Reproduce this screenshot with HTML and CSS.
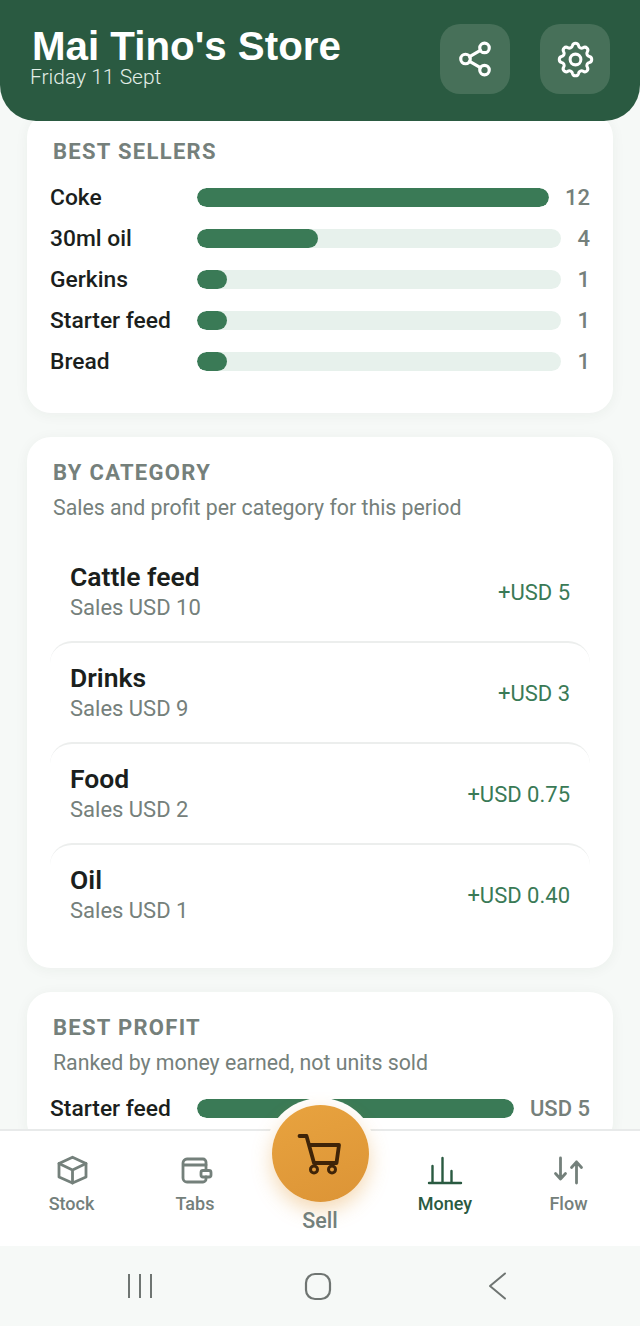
FILE: index.html
```html
<!DOCTYPE html>
<html lang="en">
<head>
<meta charset="utf-8">
<title>Mai Tino's Store</title>
<link rel="stylesheet" href="styles.css">
</head>
<body>
<div class="app">
  <header class="top">
    <div class="brand">
      <h1>Mai Tino's Store</h1>
      <p>Friday 11 Sept</p>
    </div>
    <div class="top-actions">
      <button class="icon-btn" aria-label="Share">
        <svg viewBox="0 0 24 24" width="38" height="38" fill="none" stroke="#fff" stroke-width="2" stroke-linecap="round" stroke-linejoin="round"><circle cx="18" cy="5" r="3"/><circle cx="6" cy="12" r="3"/><circle cx="18" cy="19" r="3"/><path d="M8.600 13.500l6.800 4M15.400 6.500l-6.800 4"/></svg>
      </button>
      <button class="icon-btn" aria-label="Settings">
        <svg viewBox="0 0 24 24" width="43" height="43" fill="none" stroke="#fff" stroke-width="1.700" stroke-linecap="round" stroke-linejoin="round"><path d="M10.300 4.300c.4-1.800 3-1.800 3.400 0a1.700 1.700 0 0 0 2.600 1.100c1.500-.9 3.300.8 2.300 2.300a1.700 1.700 0 0 0 1.100 2.600c1.800.4 1.800 3 0 3.400a1.700 1.700 0 0 0-1.100 2.600c.9 1.500-.8 3.300-2.300 2.300a1.700 1.700 0 0 0-2.600 1.100c-.4 1.800-3 1.800-3.400 0a1.700 1.700 0 0 0-2.600-1.100c-1.500.9-3.300-.8-2.300-2.300a1.700 1.700 0 0 0-1.100-2.600c-1.800-.4-1.800-3 0-3.400a1.700 1.700 0 0 0 1.100-2.600c-.9-1.500.8-3.300 2.300-2.300 1 .6 2.300.1 2.600-1.100z"/><circle cx="12" cy="12" r="3"/></svg>
      </button>
    </div>
  </header>

  <main class="content">
    <section class="card first">
      <h2>BEST SELLERS</h2>
      <div class="bars">
        <div class="bar-row"><span class="bar-name">Coke</span><div class="track"><div class="fill" style="width:100%"></div></div><span class="bar-val">12</span></div>
        <div class="bar-row"><span class="bar-name">30ml oil</span><div class="track"><div class="fill" style="width:33.3%"></div></div><span class="bar-val">4</span></div>
        <div class="bar-row"><span class="bar-name">Gerkins</span><div class="track"><div class="fill" style="width:8.3%"></div></div><span class="bar-val">1</span></div>
        <div class="bar-row"><span class="bar-name">Starter feed</span><div class="track"><div class="fill" style="width:8.3%"></div></div><span class="bar-val">1</span></div>
        <div class="bar-row"><span class="bar-name">Bread</span><div class="track"><div class="fill" style="width:8.3%"></div></div><span class="bar-val">1</span></div>
      </div>
    </section>

    <section class="card">
      <h2>BY CATEGORY</h2>
      <p class="sub">Sales and profit per category for this period</p>
      <div class="cats">
        <div class="cat"><div class="cat-info"><div class="cat-name">Cattle feed</div><div class="cat-sales">Sales USD 10</div></div><span class="cat-profit">+USD 5</span></div>
        <div class="cat"><div class="cat-info"><div class="cat-name">Drinks</div><div class="cat-sales">Sales USD 9</div></div><span class="cat-profit">+USD 3</span></div>
        <div class="cat"><div class="cat-info"><div class="cat-name">Food</div><div class="cat-sales">Sales USD 2</div></div><span class="cat-profit">+USD 0.75</span></div>
        <div class="cat"><div class="cat-info"><div class="cat-name">Oil</div><div class="cat-sales">Sales USD 1</div></div><span class="cat-profit">+USD 0.40</span></div>
      </div>
    </section>

    <section class="card">
      <h2>BEST PROFIT</h2>
      <p class="sub">Ranked by money earned, not units sold</p>
      <div class="bars profit">
        <div class="bar-row"><span class="bar-name">Starter feed</span><div class="track"><div class="fill" style="width:100%"></div></div><span class="bar-val">USD 5</span></div>
      </div>
    </section>
  </main>

  <nav class="tabs">
    <a class="tab">
      <svg viewBox="0 0 36 36" width="36" height="36" fill="none" stroke="#74807b" stroke-width="2.800" stroke-linecap="round" stroke-linejoin="round"><path d="M18.500 7.200L32 13.500V27l-13.500 6L5 27V13.500z"/><path d="M5 13.500L18.500 20 32 13.500M18.500 20v13"/></svg>
      <span>Stock</span>
    </a>
    <a class="tab">
      <svg viewBox="0 0 36 36" width="36" height="36" fill="none" stroke="#74807b" stroke-width="2.800" stroke-linecap="round" stroke-linejoin="round"><path d="M29 19v-7a3 3 0 0 0-3-3H10a4 4 0 0 0-4 4v15a4 4 0 0 0 4 4h16a3 3 0 0 0 3-3v-2"/><path d="M6.500 15H29"/><rect x="24" y="20.500" width="10" height="6.500" rx="2"/></svg>
      <span>Tabs</span>
    </a>
    <div class="tab sell">
      <div class="sell-halo">
        <div class="sell-btn">
          <svg viewBox="0 0 48 44" width="48" height="44" fill="none" stroke="#3f2408" stroke-width="3.800" stroke-linecap="round" stroke-linejoin="round"><path d="M3.500 4H10.500L18 31H40.500L43 13H13"/><circle cx="18" cy="37.500" r="3.500" stroke-width="3"/><circle cx="36" cy="37.500" r="3.500" stroke-width="3"/></svg>
        </div>
      </div>
      <span>Sell</span>
    </div>
    <a class="tab active">
      <svg viewBox="0 0 36 36" width="36" height="36" fill="none" stroke="#2a5a41" stroke-width="2.400" stroke-linecap="round"><path d="M2 33h32M5.500 33V16M15.500 33V8M24.500 33V21"/></svg>
      <span>Money</span>
    </a>
    <a class="tab">
      <svg viewBox="0 0 36 36" width="36" height="36" fill="none" stroke="#74807b" stroke-width="2.800" stroke-linecap="round" stroke-linejoin="round"><path d="M9.500 8v21M4.500 23.500l5 5.500 5-5.500M25.500 33V12M20.500 17.500l5-5.500 5 5.500"/></svg>
      <span>Flow</span>
    </a>
  </nav>

  <div class="sysnav">
    <svg viewBox="0 0 28 28" width="28" height="28" fill="none" stroke="#6f7572" stroke-width="2"><path d="M3 2v24M14 2v24M25 2v24"/></svg>
    <svg viewBox="0 0 28 28" width="28" height="30" fill="none" stroke="#6f7572" stroke-width="2.200"><rect x="2" y="2" width="24" height="25" rx="9"/></svg>
    <svg viewBox="0 0 20 28" width="20" height="28" fill="none" stroke="#6f7572" stroke-width="2" stroke-linecap="round" stroke-linejoin="round"><path d="M17 1.500L2 14l15 12.500"/></svg>
  </div>
</div>
</body>
</html>
```

FILE: styles.css
```css
* { box-sizing: border-box; }
html, body { margin: 0; padding: 0; }
body { font-family: Roboto, "Liberation Sans", sans-serif; background: #f6f9f7; color: #1b1f1d; }
.app { width: 640px; height: 1326px; display: flex; flex-direction: column; overflow: hidden; }

.top { position: relative; z-index: 2; height: 121px; flex: none; background: #2a5a41; border-radius: 0 0 36px 36px; display: flex; justify-content: space-between; padding: 24px 30px 0 30px; }
.brand h1 { margin: 6px 0 0 2px; font: 700 40.300px/34px "Liberation Sans", Arial, sans-serif; color: #fff; }
.brand p { margin: 1px 0 0 0; font-size: 21px; line-height: 24px; font-weight: 300; color: #e3eee8; }
.top-actions { display: flex; gap: 30px; }
.icon-btn { width: 70px; height: 70px; border: 0; padding: 0; border-radius: 20px; background: #477059; display: flex; align-items: center; justify-content: center; }

.content { flex: 1; min-height: 0; overflow: hidden; margin-top: -8px; padding: 0 27px; display: flex; flex-direction: column; gap: 24px; }
.card { flex: none; background: #fff; border-radius: 24px; padding: 23px 23px 24px 23px; box-shadow: 0 2px 14px rgba(30, 60, 45, .05); }
.card.first { height: 300px; padding-top: 26px; }
.card h2 { margin: 0 0 0 3px; font-size: 22px; line-height: 26px; font-weight: 700; letter-spacing: 1.3px; color: #75807b; }
.sub { margin: 9px 0 0 3px; font-size: 21.300px; line-height: 26px; color: #75807b; font-weight: 400; }

.bars { margin-top: 18px; display: flex; flex-direction: column; gap: 13px; }
.bars.profit { margin-top: 18px; }
.bar-row { display: flex; align-items: center; height: 28px; }
.bar-name { width: 147px; flex: none; font-size: 22.800px; font-weight: 500; color: #1b1f1d; }
.track { flex: 1; height: 19px; background: #e7f1ec; border-radius: 10px; overflow: hidden; }
.fill { height: 100%; background: #3a7a56; border-radius: 10px; min-width: 30px; }
.bar-val { margin-left: 16px; font-size: 22px; font-weight: 500; color: #75807b; text-align: right; }

.cats { margin-top: 19px; }
.cat { height: 101px; display: flex; align-items: center; justify-content: space-between; padding: 2px 20px 0; border-top: 2px solid #eceeed; border-radius: 22px 22px 0 0; }
.cat:first-child { border-top-color: transparent; }
.cat-info { margin-top: -2px; }
.cat-name { font-size: 26.500px; line-height: 32px; font-weight: 600; color: #1b1f1d; }
.cat-sales { font-size: 22px; line-height: 29px; color: #75807b; font-weight: 400; }
.cat-profit { font-size: 22px; color: #3a7a56; font-weight: 400; }

.tabs { position: relative; z-index: 3; flex: none; height: 117px; background: #fff; border-top: 2px solid #e8eaea; display: grid; grid-template-columns: 143px 104px 146px 104px 143px; }
.tab { display: flex; flex-direction: column; align-items: center; padding-top: 19px; font-size: 18px; font-weight: 500; color: #74807b; }
.tab svg { display: block; }
.tab span { line-height: 22px; margin-top: 7px; }
.tab.active { color: #2a5a41; }
.tab.sell { position: relative; padding-top: 0; }
.sell-halo { width: 111px; height: 111px; margin-top: -33px; padding: 7px; border-radius: 50%; background: #fff; }
.sell-btn { width: 97px; height: 97px; border-radius: 50%; background: linear-gradient(160deg, #e8a33f, #dc9436); display: flex; align-items: center; justify-content: center; box-shadow: 0 8px 20px rgba(227, 156, 59, .38); }
.sell span { margin-top: 1px; font-size: 21.500px; color: #74807b; }

.sysnav { flex: none; height: 80px; background: #f6f9f7; display: grid; grid-template-columns: 178px 184px 20px; align-items: center; padding-left: 126px; }
```
